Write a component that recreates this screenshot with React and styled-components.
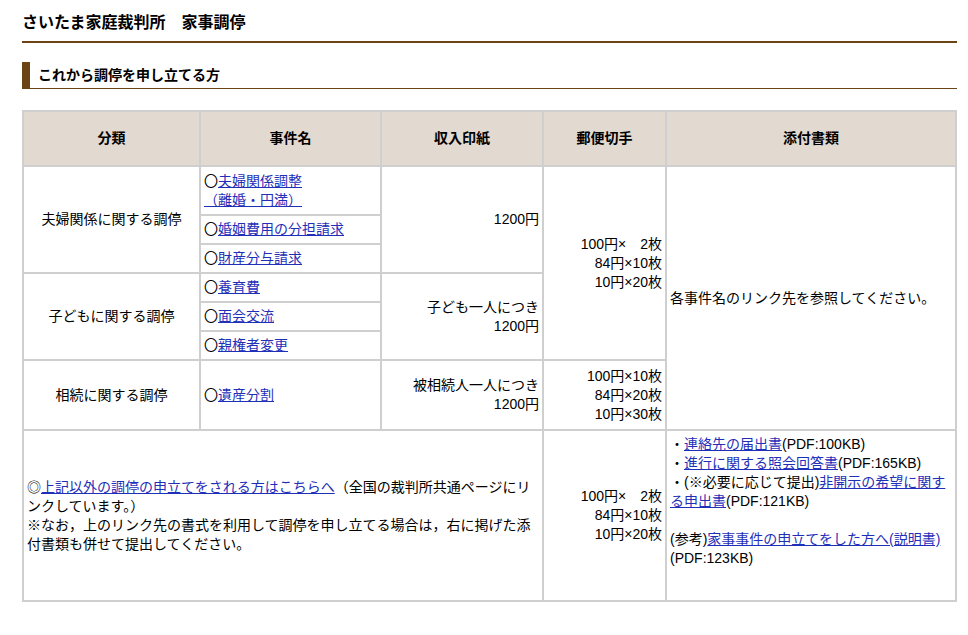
import styled, { createGlobalStyle } from "styled-components";

const Global = createGlobalStyle`
  body { margin: 0; background: #fff; font-family: "Liberation Sans", "Noto Sans CJK JP", sans-serif; color: #000; }
`;

const Page = styled.div`
  padding: 12px 11px 0 22px;
`;

const Title = styled.h1`
  margin: 0;
  font-size: 16px;
  font-weight: bold;
  padding: 0 0 7px 0;
  border-bottom: 2px solid #6b4414;
  line-height: 22px;
`;

const Sub = styled.h2`
  margin: 19px 0 0;
  font-size: 14px;
  font-weight: bold;
  line-height: 26px;
  border-left: 8px solid #6b4414;
  border-bottom: 1px solid #6b4414;
  padding-left: 8px;
`;

const Table = styled.table`
  margin-top: 21px;
  width: 935px;
  table-layout: fixed;
  border-collapse: collapse;
  border: 2px solid #c8c8c8;
  font-size: 14px;
  td, th { border: 2px solid #cfcfcf; padding: 0 3px; line-height: 19px; }
`;

const Th = styled.th`
  background: #e2d9d0;
  height: 53px;
  font-weight: bold;
`;

const Td = styled.td`
  text-align: ${(p) => p.align || "left"};
  height: ${(p) => (p.h ? `${p.h}px` : "auto")};
  vertical-align: ${(p) => p.valign || "middle"};
`;

const Link = styled.a`
  color: #1f2fb8;
  text-decoration: underline;
`;

const Line = styled.div`
  white-space: pre;
`;

const Stamps = ({ lines }) => (
  <>
    {lines.map((l, i) => (
      <Line key={i}>{l}</Line>
    ))}
  </>
);

const Case = ({ children }) => (
  <>
    〇<Link href="#">{children}</Link>
  </>
);

export default function App() {
  return (
    <Page>
      <Global />
      <Title>さいたま家庭裁判所　家事調停</Title>
      <Sub>これから調停を申し立てる方</Sub>
      <Table>
        <colgroup>
          <col style={{ width: 177 }} />
          <col style={{ width: 181 }} />
          <col style={{ width: 162 }} />
          <col style={{ width: 123 }} />
          <col />
        </colgroup>
        <thead>
          <tr>
            <Th>分類</Th>
            <Th>事件名</Th>
            <Th>収入印紙</Th>
            <Th>郵便切手</Th>
            <Th>添付書類</Th>
          </tr>
        </thead>
        <tbody>
          <tr>
            <Td rowSpan={3} align="center">夫婦関係に関する調停</Td>
            <Td h={47}><Case>夫婦関係調整<br />（離婚・円満）</Case></Td>
            <Td rowSpan={3} align="right">1200円</Td>
            <Td rowSpan={6} align="right"><Stamps lines={["100円×　2枚", "84円×10枚", "10円×20枚"]} /></Td>
            <Td rowSpan={7}>各事件名のリンク先を参照してください。</Td>
          </tr>
          <tr><Td h={27}><Case>婚姻費用の分担請求</Case></Td></tr>
          <tr><Td h={27}><Case>財産分与請求</Case></Td></tr>
          <tr>
            <Td rowSpan={3} align="center">子どもに関する調停</Td>
            <Td h={27}><Case>養育費</Case></Td>
            <Td rowSpan={3} align="right">子ども一人につき<br />1200円</Td>
          </tr>
          <tr><Td h={27}><Case>面会交流</Case></Td></tr>
          <tr><Td h={27}><Case>親権者変更</Case></Td></tr>
          <tr>
            <Td align="center" h={68}>相続に関する調停</Td>
            <Td><Case>遺産分割</Case></Td>
            <Td align="right">被相続人一人につき<br />1200円</Td>
            <Td align="right"><Stamps lines={["100円×10枚", "84円×20枚", "10円×30枚"]} /></Td>
          </tr>
          <tr>
            <Td colSpan={3} h={169}>
              ◎<Link href="#">上記以外の調停の申立てをされる方はこちらへ</Link>（全国の裁判所共通ページにリンクしています。）<br />
              ※なお，上のリンク先の書式を利用して調停を申し立てる場合は，右に掲げた添付書類も併せて提出してください。
            </Td>
            <Td align="right"><Stamps lines={["100円×　2枚", "84円×10枚", "10円×20枚"]} /></Td>
            <Td valign="top" style={{ paddingTop: 4 }}>
              ・<Link href="#">連絡先の届出書</Link>(PDF:100KB)<br />
              ・<Link href="#">進行に関する照会回答書</Link>(PDF:165KB)<br />
              ・(※必要に応じて提出)<Link href="#">非開示の希望に関する申出書</Link>(PDF:121KB)<br /><br />
              (参考)<Link href="#">家事事件の申立てをした方へ(説明書)</Link>(PDF:123KB)
            </Td>
          </tr>
        </tbody>
      </Table>
    </Page>
  );
}
